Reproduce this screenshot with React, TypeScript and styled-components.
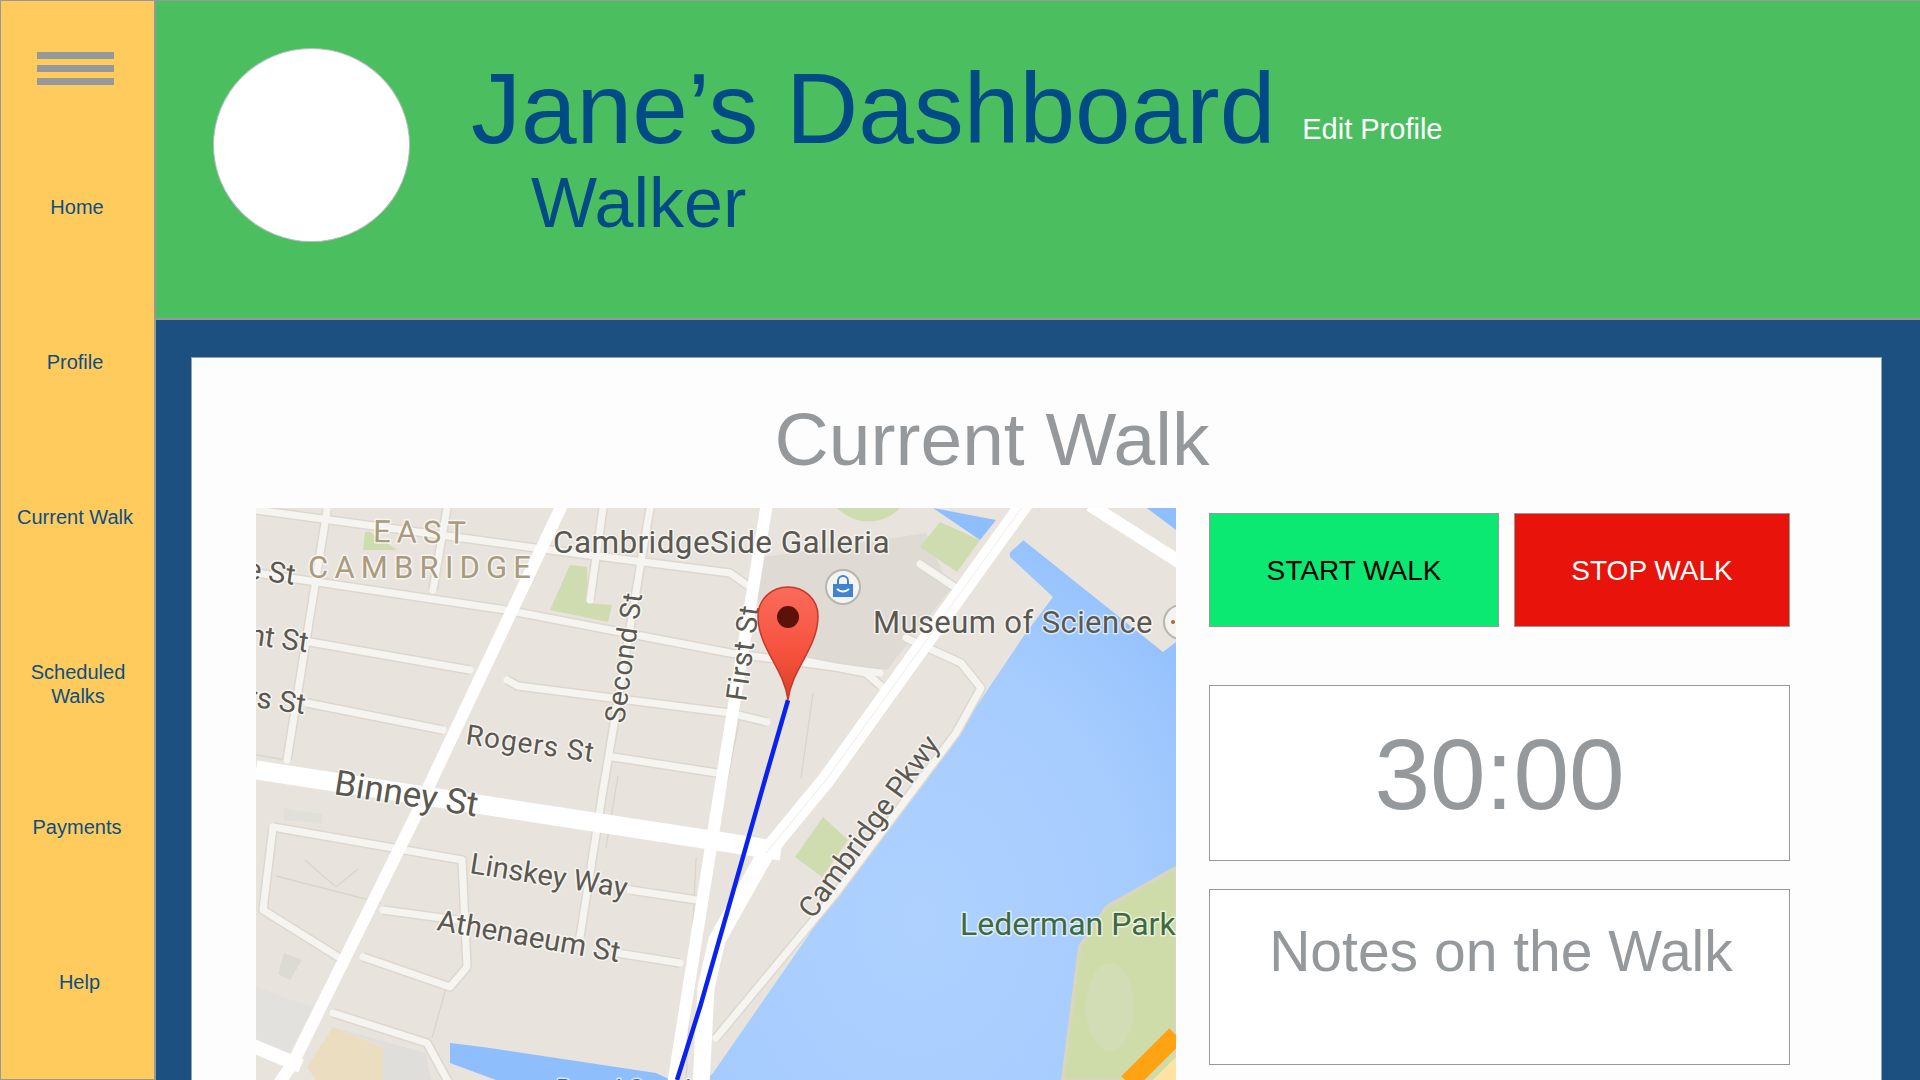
import React from 'react';
import styled, { createGlobalStyle } from 'styled-components';

const GlobalStyle = createGlobalStyle`
  html, body {
    margin: 0;
    padding: 0;
    height: 100%;
    overflow: hidden;
    font-family: 'Liberation Sans', Arial, sans-serif;
  }
`;

const Page = styled.div`
  display: grid;
  grid-template-columns: 156px 1fr;
  width: 1920px;
  height: 1080px;
  overflow: hidden;
`;

const Sidebar = styled.nav`
  box-sizing: border-box;
  height: 1080px;
  background: #ffcb5c;
  border: 1px solid #95999c;
  border-right-width: 2px;
  color: #0b4f85;
`;

const Burger = styled.div`
  display: flex;
  flex-direction: column;
  gap: 6px;
  width: 77px;
  margin: 51px 0 45px 36px;
`;

const BurgerBar = styled.span`
  display: block;
  height: 7px;
  background: #95999c;
`;

const NavItem = styled.a<{ $offset: number }>`
  display: block;
  box-sizing: border-box;
  height: 155px;
  padding: 65px ${p => Math.max(0, -2 * p.$offset)}px 0 ${p => Math.max(0, 2 * p.$offset)}px;
  font-size: 20px;
  line-height: 24px;
  text-align: center;
`;

const Main = styled.div`
  display: flex;
  flex-direction: column;
  height: 1080px;
  background: #1c5080;
`;

const Header = styled.header`
  box-sizing: border-box;
  display: flex;
  flex: none;
  height: 320px;
  padding: 47px 0 0 57px;
  background: #4bbf60;
  border-top: 1px solid #95999c;
  border-bottom: 2px solid #95999c;
`;

const Avatar = styled.div`
  box-sizing: border-box;
  flex: none;
  width: 197px;
  height: 194px;
  border-radius: 50%;
  background: #fff;
  border: 1px solid #b9bcbd;
`;

const Identity = styled.div`
  padding: 10px 0 0 61px;
`;

const TitleRow = styled.div`
  display: flex;
  align-items: flex-start;
  gap: 27px;
`;

const Title = styled.h1`
  margin: 0;
  color: #004b85;
  font-size: 100px;
  font-weight: 400;
  line-height: 100px;
  white-space: nowrap;
`;

const EditLink = styled.a`
  padding-top: 54px;
  color: #fff;
  font-size: 29px;
  line-height: 34px;
  white-space: nowrap;
`;

const Role = styled.div`
  margin: 10px 0 0 60px;
  color: #004b85;
  font-size: 70px;
  line-height: 70px;
`;

const Workspace = styled.main`
  flex: 1;
  min-height: 0;
  padding: 37px 38px 0 35px;
`;

const Card = styled.section`
  box-sizing: border-box;
  height: 100%;
  padding: 0 0 0 64px;
  background: #fdfdfd;
  border: 1px solid #8fa3b5;
  border-bottom: 0;
`;

const CardTitle = styled.h2`
  margin: 0;
  padding-right: 153px;
  height: 150px;
  color: #95999c;
  font-size: 75px;
  font-weight: 400;
  line-height: 162px;
  text-align: center;
`;

const Columns = styled.div`
  display: flex;
  gap: 33px;
`;

const MapFrame = styled.svg`
  display: block;
  flex: none;
  width: 920px;
  height: 572px;
`;

const Controls = styled.div`
  display: flex;
  flex-direction: column;
  width: 581px;
  padding-top: 5px;
`;

const ButtonRow = styled.div`
  display: flex;
  gap: 15px;
  margin-bottom: 58px;
`;

const WalkButton = styled.button<{ $bg: string; $fg: string; $width: number }>`
  box-sizing: border-box;
  width: ${p => p.$width}px;
  height: 114px;
  padding: 2px 0 0;
  background: ${p => p.$bg};
  color: ${p => p.$fg};
  border: 1px solid #95999c;
  font-family: inherit;
  font-size: 28px;
`;

const Panel = styled.div`
  box-sizing: border-box;
  height: 176px;
  background: #fff;
  border: 1px solid #95999c;
  color: #95999c;
  text-align: center;
`;

const Timer = styled(Panel)`
  display: flex;
  align-items: center;
  justify-content: center;
  margin-bottom: 28px;
  padding-top: 2px;
  font-size: 100px;
`;

const Notes = styled(Panel)`
  padding: 26px 0 0 3px;
  font-size: 57px;
  line-height: 70px;
`;

const MapLabel = styled.text<{ $color?: string; $size: number; $spacing?: number }>`
  fill: ${p => p.$color || '#5b5850'};
  font-family: Roboto, 'Liberation Sans', sans-serif;
  font-size: ${p => p.$size}px;
  letter-spacing: ${p => p.$spacing || 0}px;
  paint-order: stroke;
  stroke: rgba(255, 255, 255, 0.65);
  stroke-width: 3px;
  stroke-linejoin: round;
`;

const navItems = [
  { label: 'Home', offset: -0.5 },
  { label: 'Profile', offset: -2.5 },
  { label: 'Current Walk', offset: -2.5 },
  { label: 'Scheduled Walks', offset: 0.5 },
  { label: 'Payments', offset: -0.5 },
  { label: 'Help', offset: 2 },
];

const bigRoads = [
  { d: 'M769 -5 L570 272 L510 345 L461 432 L450 480 L445 577', w: 17 },
  { d: 'M511 -5 L464 282 L417 577', w: 12 },
  { d: 'M0 262 L474 335 L525 343', w: 19 },
  { d: 'M307 -5 L171 282 L161 305 L37 555 L22 577', w: 12 },
  { d: 'M-5 537 L45 558', w: 14 },
  { d: 'M834 -3 L925 55', w: 13 },
];

const smallRoads = [
  'M0 2 L294 42 L474 65 L494 79',
  'M0 65 L250 102 L474 145 L624 165',
  'M54 134 L214 162',
  'M51 195 L187 222',
  'M251 172 L262 178 L474 205 L511 214',
  'M357 249 L461 265',
  'M71 2 L31 252',
  'M191 0 L177 82',
  'M347 0 L334 92',
  'M394 0 L347 282 L324 429',
  'M17 319 L206 352 L211 459 L194 479 L107 449',
  'M17 319 L7 402 L87 452',
  'M127 402 L201 412',
  'M374 382 L441 392',
  'M361 445 L424 455',
  'M77 505 L171 535 L194 577',
  'M664 56 L700 80',
  'M544 152 L610 165 L625 178',
  'M650 130 L705 155 L725 180 L700 225 L580 385 L460 530',
];

const thinLines = [
  'M31 252 L0 247', 'M20 368 L125 395', 'M49 352 L80 379 L102 361',
  'M190 480 L176 530', 'M484 208 L470 280', 'M557 185 L545 270',
  'M362 268 L350 340', 'M440 350 L430 575',
];

const labels = [
  { text: 'e St', x: -11, y: 70, r: 8, size: 29 },
  { text: 'nt St', x: -8, y: 136, r: 8, size: 29 },
  { text: 'rs St', x: -10, y: 198, r: 8, size: 29 },
  { text: 'CambridgeSide Galleria', x: 297, y: 45, r: 0, size: 31.5, spacing: 0.4 },
  { text: 'Rogers St', x: 209, y: 236, r: 8, size: 28, spacing: 1 },
  { text: 'Second St', x: 368, y: 216, r: -82, size: 28, spacing: 0.6 },
  { text: 'First St', x: 490, y: 194, r: -82, size: 29, spacing: 0.6 },
  { text: 'Museum of Science', x: 617, y: 125, r: 0, size: 31, spacing: 0.4 },
  { text: 'Binney St', x: 77, y: 286, r: 9, size: 35 },
  { text: 'Linskey Way', x: 213, y: 365, r: 9, size: 29 },
  { text: 'Athenaeum St', x: 180, y: 422, r: 10, size: 29.5 },
  { text: 'Cambridge Pkwy', x: 557, y: 412, r: -54, size: 29 },
];

const Pin = () => (
  <g>
    <path
      d="M532 192 C528 160 502 140 502 108 C502 91 516 79 532 79 C548 79 562 91 562 108 C562 140 536 160 532 192 Z"
      fill="url(#pinFill)"
      stroke="#c5382a"
      strokeWidth="1.5"
    />
    <circle cx="532" cy="109" r="11" fill="#5c1208" />
  </g>
);

const StreetMap = () => (
  <MapFrame viewBox="0 0 920 572">
    <defs>
      <linearGradient id="pinFill" x1="0" y1="0" x2="0" y2="1">
        <stop offset="0" stopColor="#fb6b5c" />
        <stop offset="0.6" stopColor="#f5513c" />
        <stop offset="1" stopColor="#d8402a" />
      </linearGradient>
      <radialGradient id="waterFill" cx="0.45" cy="0.72" r="0.8">
        <stop offset="0" stopColor="#aed1ff" />
        <stop offset="0.6" stopColor="#a6ccfe" />
        <stop offset="1" stopColor="#8fbefc" />
      </radialGradient>
    </defs>
    <rect width="920" height="572" fill="#e8e4dd" />

    {/* water and land shapes */}
    <path
      d="M754 49 L797 89 L767 129 L671 272 L561 415 L457 565 L450 572 L920 572 L920 0 L750 0 Z"
      fill="url(#waterFill)"
    />
    <path d="M767 32 L784 0 L891 0 L920 22 L920 134 L907 144 Z" fill="#e8e4dd" />
    <path d="M770 30 L784 0 L720 0 L690 14 L750 48 Z" fill="#e8e4dd" />
    <path d="M677 0 L740 12 L724 32 Z" fill="#8fbefc" />
    <path d="M891 0 L920 0 L920 20 Z" fill="#8fbefc" />
    <path d="M501 50 L670 25 L694 82 L631 162 L544 152 L501 92 Z" fill="#dfdbd4" />

    <path d="M684 14 L664 39 L701 64 L724 32 Z" fill="#cfdcb0" />
    <path d="M581 0 C600 18 626 18 644 0 Z" fill="#cfdcb0" />
    <path d="M567 309 L592 332 L566 369 L539 349 Z" fill="#cfdcb0" />
    <path d="M314 57 L331 59 L332 95 L356 97 L352 114 L294 102 Z" fill="#cfdcb0" />
    <path d="M109 24 L114 24 L141 42 L107 42 Z" fill="#cfdcb0" />
    <path d="M920 360 L851 399 L824 439 L807 572 L920 572 Z" fill="#cddca9" stroke="#d8d6bb" strokeWidth="4" />
    <ellipse cx="854" cy="499" rx="24" ry="44" fill="#d2ddb6" />

    <path d="M51 559 L77 519 L127 539 L127 572 L60 572 Z" fill="#ebddbf" />
    <path d="M80 520 L170 545 L175 572 L127 572 L127 538 Z" fill="#dfdedb" />
    <path d="M0 479 L57 499 L31 549 L0 532 Z" fill="#e2e1de" />
    <path d="M28 445 L46 452 L34 472 L22 466 Z" fill="#dcdad4" />
    <path d="M28 300 L66 306 L66 316 L28 312 Z" fill="#e1dfda" />
    <path d="M194 535 L227 539 L400 565 L415 572 L240 572 L194 555 Z" fill="#8fbefc" />

    {/* streets */}
    <g fill="none" stroke="#d9d5cb" strokeWidth="1.3">
      {thinLines.map(d => (
        <path key={d} d={d} />
      ))}
    </g>
    <g fill="none" stroke="#dcd8cf" strokeWidth="10" strokeLinejoin="round">
      {smallRoads.map(d => (
        <path key={d} d={d} />
      ))}
    </g>
    <g fill="none" stroke="#f6f4f0" strokeWidth="7" strokeLinejoin="round" strokeLinecap="round">
      {smallRoads.map(d => (
        <path key={d} d={d} />
      ))}
    </g>
    <g fill="none" stroke="#fff" strokeLinejoin="round">
      {bigRoads.map(road => (
        <path key={road.d} d={road.d} strokeWidth={road.w} />
      ))}
    </g>
    <path d="M769 -5 L570 272 L510 345" fill="none" stroke="#eeece7" strokeWidth="1" />

    <path d="M920 527 L872 575" fill="none" stroke="#ffa312" strokeWidth="19" />
    <path d="M920 549 L897 572 L920 572 Z" fill="#ffe3a0" />

    {/* labels */}
    <MapLabel x="117" y="34" $size={31} $spacing={6} $color="#aa9b7e" transform="rotate(1 117 34)">
      EAST
    </MapLabel>
    <MapLabel x="52" y="70" $size={31} $spacing={6.2} $color="#aa9b7e">
      CAMBRIDGE
    </MapLabel>
    {labels.map(l => (
      <MapLabel key={l.text} x={l.x} y={l.y} $size={l.size} $spacing={l.spacing} transform={`rotate(${l.r} ${l.x} ${l.y})`}>
        {l.text}
      </MapLabel>
    ))}
    <MapLabel x="704" y="427" $size={32} $color="#3e6a3e">
      Lederman Park
    </MapLabel>
    <MapLabel x="300" y="590" $size={25} $color="#3c6a94">
      Broad Canal
    </MapLabel>

    {/* route and markers */}
    <polyline points="532,192 508,275 487,349 444,499 421,572" fill="none" stroke="#0a22f0" strokeWidth="4.5" />
    <Pin />
    <circle cx="587" cy="79" r="17" fill="#f4f3f0" stroke="#b5b5b2" strokeWidth="2" />
    <path d="M577 76 H597 V89 H577 Z" fill="#3f84d0" />
    <path d="M582 76 V73 A5 5 0 0 1 592 73 V76" fill="none" stroke="#3f84d0" strokeWidth="2" />
    <path d="M581 81 Q587 86 593 81" fill="none" stroke="#fff" strokeWidth="2" />
    <circle cx="925" cy="114" r="17" fill="#f4f3f0" stroke="#b5b5b2" strokeWidth="2" />
    <circle cx="917" cy="114" r="2" fill="#a5683a" />
  </MapFrame>
);

const App = () => (
  <Page>
    <GlobalStyle />
    <Sidebar>
      <Burger>
        <BurgerBar />
        <BurgerBar />
        <BurgerBar />
      </Burger>
      {navItems.map(item => (
        <NavItem key={item.label} $offset={item.offset}>
          {item.label}
        </NavItem>
      ))}
    </Sidebar>
    <Main>
      <Header>
        <Avatar />
        <Identity>
          <TitleRow>
            <Title>Jane’s Dashboard</Title>
            <EditLink>Edit Profile</EditLink>
          </TitleRow>
          <Role>Walker</Role>
        </Identity>
      </Header>
      <Workspace>
        <Card>
          <CardTitle>Current Walk</CardTitle>
          <Columns>
            <StreetMap />
            <Controls>
              <ButtonRow>
                <WalkButton $bg="#0be973" $fg="#000" $width={290}>
                  START WALK
                </WalkButton>
                <WalkButton $bg="#e8140b" $fg="#fff" $width={276}>
                  STOP WALK
                </WalkButton>
              </ButtonRow>
              <Timer>30:00</Timer>
              <Notes>Notes on the Walk</Notes>
            </Controls>
          </Columns>
        </Card>
      </Workspace>
    </Main>
  </Page>
);

export default App;
